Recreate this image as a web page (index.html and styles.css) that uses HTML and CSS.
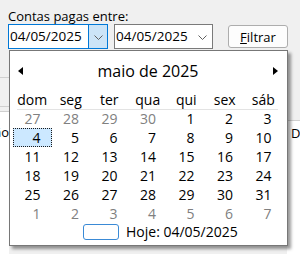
FILE: index.html
```html
<!DOCTYPE html>
<html lang="pt-BR">
<head>
<meta charset="utf-8">
<title>Contas pagas</title>
<link rel="stylesheet" href="styles.css">
</head>
<body>
<div class="form">
  <div class="label">Contas pagas entre:</div>
  <div class="controls">
    <div class="date d1">
      <span class="val">04/05/2025</span>
      <span class="drop"><svg width="9" height="5" viewBox="0 0 9 5"><polyline points="0.5,0.5 4.5,4.5 8.5,0.5" fill="none" stroke="#606060" stroke-width="1"/></svg></span>
    </div>
    <div class="date d2">
      <span class="val">04/05/2025</span>
      <span class="drop"><svg width="9" height="5" viewBox="0 0 9 5"><polyline points="0.5,0.5 4.5,4.5 8.5,0.5" fill="none" stroke="#606060" stroke-width="1"/></svg></span>
    </div>
    <button class="btn"><u>F</u>iltrar</button>
  </div>
</div>
<div class="content">
  <div class="lpane">
    <div class="l1"></div>
    <div class="l2"></div>
    <div class="l3"></div>
    <div class="l4"><span>Descrição</span></div>
  </div>
  <div class="rpane">
    <div class="r1"></div>
    <div class="r2">Data</div>
  </div>
</div>
<div class="popup">
  <div class="cal-title">
    <span class="arrow left"></span>
    <span class="title">maio de 2025</span>
    <span class="arrow right"></span>
  </div>
  <div class="cal-head">
    <div class="head-grid">
      <span>dom</span><span>seg</span><span>ter</span><span>qua</span><span>qui</span><span>sex</span><span>sáb</span>
    </div>
  </div>
  <div class="days">
    <span class="o">27</span><span class="o">28</span><span class="o">29</span><span class="o">30</span><span>1</span><span>2</span><span>3</span>
    <span class="sel">4</span><span>5</span><span>6</span><span>7</span><span>8</span><span>9</span><span>10</span>
    <span>11</span><span>12</span><span>13</span><span>14</span><span>15</span><span>16</span><span>17</span>
    <span>18</span><span>19</span><span>20</span><span>21</span><span>22</span><span>23</span><span>24</span>
    <span>25</span><span>26</span><span>27</span><span>28</span><span>29</span><span>30</span><span>31</span>
    <span class="o">1</span><span class="o">2</span><span class="o">3</span><span class="o">4</span><span class="o">5</span><span class="o">6</span><span class="o">7</span>
  </div>
  <div class="today">
    <span class="tbox"></span>
    <span>Hoje: 04/05/2025</span>
  </div>
</div>
</body>
</html>
```
FILE: styles.css
```css
html, body {
  margin: 0;
  padding: 0;
}
body {
  width: 300px;
  height: 254px;
  overflow: hidden;
  position: relative;
  background: #f0f0f0;
  font-family: "Open Sans", "Noto Sans", sans-serif;
  color: #000;
}
.form {
  padding: 8px 0 0 8px;
}
.label {
  font-size: 13px;
  line-height: 16px;
  height: 16px;
}
.controls {
  display: flex;
  align-items: center;
  height: 25px;
}
.date {
  box-sizing: border-box;
  height: 25px;
  border: 1px solid #7a7a7a;
  background: #fff;
  display: flex;
  align-items: stretch;
  font-size: 13.5px;
}
.d1 {
  width: 100px;
  border-color: #0078d7;
}
.d2 {
  width: 99px;
  margin-left: 6px;
}
.val {
  flex: 1;
  padding-left: 1px;
  line-height: 23px;
  white-space: nowrap;
}
.drop {
  box-sizing: border-box;
  width: 19px;
  display: flex;
  align-items: center;
  justify-content: center;
  padding-top: 1px;
}
.d1 .drop {
  background: #cce4f7;
  border-left: 1px solid #0078d7;
}
.btn {
  margin-left: 15px;
  width: 60px;
  height: 23px;
  box-sizing: border-box;
  border: 1px solid #adadad;
  border-radius: 3px;
  background: #fdfdfd;
  font-family: "Open Sans", "Noto Sans", sans-serif;
  font-size: 13px;
  color: #000;
  padding: 0;
}
.content {
  display: flex;
  justify-content: space-between;
  height: 205px;
}
.lpane {
  width: 9px;
  overflow: hidden;
}
.l1 { height: 28px; }
.l2 {
  height: 28px;
  border-top: 1px solid #d0d0d0;
}
.l3 {
  height: 4px;
  border-top: 1px solid #d0d0d0;
}
.l4 {
  border-top: 1px solid #d0d0d0;
  background: #fff;
  height: 140px;
  display: flex;
  justify-content: flex-end;
  padding-top: 12px;
  font-size: 13px;
  line-height: 16px;
  white-space: nowrap;
}
.rpane {
  width: 13px;
  overflow: hidden;
}
.r1 { height: 71px; }
.r2 {
  border-top: 1px solid #d0d0d0;
  background: #fff;
  height: 130px;
  padding: 4px 0 0 4px;
  font-size: 13px;
  line-height: 16px;
  white-space: nowrap;
}
.popup {
  position: absolute;
  left: 9px;
  top: 50px;
  width: 279px;
  box-sizing: border-box;
  border: 1px solid #777;
  background: #fff;
  box-shadow: 3px 3px 3px rgba(0, 0, 0, 0.4);
  padding-bottom: 5px;
  font-size: 14px;
}
.cal-title {
  margin-top: 7px;
  height: 26px;
  display: flex;
  align-items: center;
  justify-content: space-between;
  padding: 0 9px 0 8px;
}
.title {
  font-size: 16px;
  line-height: 26px;
}
.arrow {
  width: 0;
  height: 0;
  border-top: 4px solid transparent;
  border-bottom: 4px solid transparent;
}
.arrow.left { border-right: 5px solid #000; }
.arrow.right { border-left: 5px solid #000; }
.cal-head {
  margin: 7px 9px 0 7px;
  height: 18px;
  border-bottom: 1px solid #e3e3e3;
}
.head-grid {
  display: grid;
  grid-template-columns: repeat(7, 38.5px);
  margin-left: -4px;
  line-height: 18px;
  text-align: center;
}
.days {
  display: grid;
  grid-template-columns: repeat(7, 38.5px);
  grid-auto-rows: 19px;
  margin: -1px 0 0 3px;
}
.days span {
  box-sizing: border-box;
  text-align: right;
  padding-right: 11px;
  line-height: 19px;
}
.days .o { color: #808080; }
.days .sel {
  background: #cce8ff;
  border: 1px dotted #1a1a1a;
  padding-right: 10px;
  line-height: 17px;
}
.today {
  display: flex;
  align-items: center;
  gap: 7px;
  height: 16px;
  margin-top: 1px;
  padding-left: 73px;
  line-height: 16px;
}
.tbox {
  box-sizing: border-box;
  width: 36px;
  height: 16px;
  border: 1px solid #3a8ad6;
  border-radius: 3px;
}
```
